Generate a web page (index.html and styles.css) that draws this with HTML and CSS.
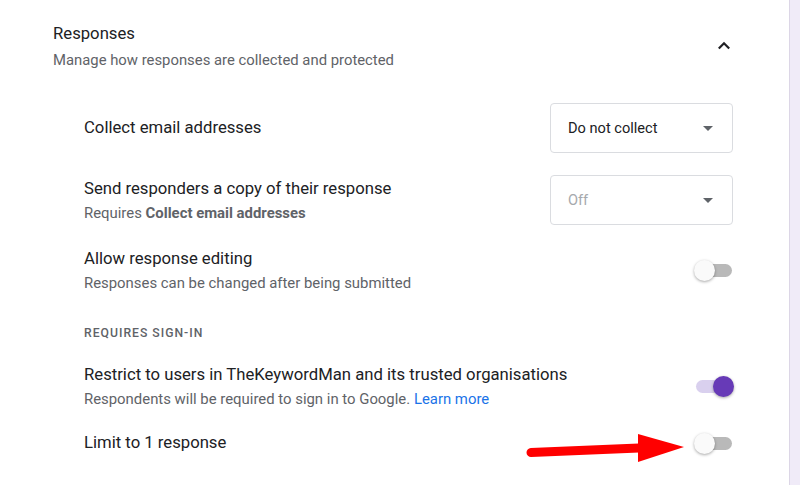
FILE: index.html
```html
<!DOCTYPE html>
<html lang="en">
<head>
<meta charset="utf-8">
<title>Responses settings</title>
<link rel="stylesheet" href="styles.css">
</head>
<body>
<div class="page">
  <section class="card">
    <header class="card-header">
      <div class="header-text">
        <div class="title">Responses</div>
        <div class="subtitle">Manage how responses are collected and protected</div>
      </div>
      <svg class="chevron" width="14" height="9" viewBox="0 0 14 9" aria-hidden="true">
        <path d="M1.8 7.5 L7 2.3 L12.2 7.5" fill="none" stroke="#202124" stroke-width="2.2"/>
      </svg>
    </header>

    <div class="settings">
      <div class="row">
        <div class="row-text">
          <div class="row-title">Collect email addresses</div>
        </div>
        <div class="select">
          <span class="select-value">Do not collect</span>
          <span class="caret"></span>
        </div>
      </div>

      <div class="row">
        <div class="row-text">
          <div class="row-title">Send responders a copy of their response</div>
          <div class="row-sub">Requires <b>Collect email addresses</b></div>
        </div>
        <div class="select">
          <span class="select-value disabled">Off</span>
          <span class="caret"></span>
        </div>
      </div>

      <div class="row">
        <div class="row-text">
          <div class="row-title">Allow response editing</div>
          <div class="row-sub">Responses can be changed after being submitted</div>
        </div>
        <div class="toggle"><span class="track"></span><span class="thumb"></span></div>
      </div>

      <div class="section-label">REQUIRES SIGN-IN</div>

      <div class="row">
        <div class="row-text">
          <div class="row-title">Restrict to users in TheKeywordMan and its trusted organisations</div>
          <div class="row-sub">Respondents will be required to sign in to Google. <a class="link" href="#">Learn more</a></div>
        </div>
        <div class="toggle on"><span class="track"></span><span class="thumb"></span></div>
      </div>

      <div class="row">
        <div class="row-text">
          <div class="row-title">Limit to 1 response</div>
        </div>
        <div class="toggle"><span class="track"></span><span class="thumb"></span></div>
      </div>
    </div>

    <svg class="annotation" width="170" height="40" viewBox="0 0 170 40" aria-hidden="true">
      <line x1="10" y1="28.5" x2="118" y2="24" stroke="#ff0000" stroke-width="9" stroke-linecap="round"/>
      <polygon points="117,10 163,23 117,38" fill="#ff0000"/>
    </svg>
  </section>
  <div class="side"></div>
</div>
</body>
</html>
```

FILE: styles.css
```css
* { box-sizing: border-box; }

html, body {
  margin: 0;
  padding: 0;
  height: 100%;
  background: #ffffff;
  font-family: Roboto, "Liberation Sans", Arial, sans-serif;
  color: #202124;
}

.page {
  display: flex;
  height: 485px;
  overflow: hidden;
}

.card {
  position: relative;
  width: 790px;
  flex: none;
  background: #ffffff;
  border-right: 1px solid #dcd6e6;
  padding: 22px 56px 0 53px;
}

.side {
  flex: 1;
  background: #f0ebf8;
}

.card-header {
  display: flex;
  align-items: center;
  justify-content: space-between;
}

.title {
  font-size: 16.7px;
  line-height: 24px;
  color: #202124;
}

.subtitle {
  margin-top: 4px;
  font-size: 14.85px;
  line-height: 20px;
  color: #5f6368;
}

.chevron {
  display: block;
  margin-right: 2px;
  margin-top: -1px;
}

.settings {
  display: flex;
  flex-direction: column;
  gap: 22px;
  margin-top: 33px;
  padding-left: 31px;
}

.row {
  display: flex;
  align-items: center;
  justify-content: space-between;
}

.row-title {
  font-size: 16.7px;
  line-height: 24px;
  color: #202124;
}

.row-sub {
  margin-top: 2px;
  font-size: 14.9px;
  line-height: 20px;
  color: #5f6368;
}

.row-sub b {
  font-weight: 700;
  color: #5f6368;
}

.link {
  color: #1a73e8;
  text-decoration: none;
}

.select {
  width: 183px;
  height: 50px;
  border: 1px solid #dadce0;
  border-radius: 4px;
  display: flex;
  align-items: center;
  justify-content: space-between;
  padding: 0 19px 0 17px;
}

.select-value {
  font-size: 14.6px;
  line-height: 20px;
  color: #202124;
}

.select-value.disabled {
  color: #a6a9ad;
}

.caret {
  width: 0;
  height: 0;
  border-left: 5px solid transparent;
  border-right: 5px solid transparent;
  border-top: 5px solid #5f6368;
}

.toggle {
  position: relative;
  width: 39px;
  height: 21px;
  flex: none;
}

.toggle .track {
  position: absolute;
  left: 2px;
  top: 4px;
  width: 36px;
  height: 13px;
  border-radius: 7px;
  background: #b9b9b9;
}

.toggle .thumb {
  position: absolute;
  left: 0;
  top: 0;
  width: 21px;
  height: 21px;
  border-radius: 50%;
  background: #fafafa;
  box-shadow: 0 1px 3px rgba(0, 0, 0, 0.35);
}

.toggle.on .track {
  background: #d9d0ee;
}

.toggle.on .thumb {
  left: 19px;
  background: #673ab7;
}

.section-label {
  margin-top: 10px;
  font-size: 12.2px;
  line-height: 16px;
  font-weight: 500;
  letter-spacing: 1px;
  color: #5f6368;
}

.annotation {
  position: absolute;
  left: 521px;
  top: 424px;
}
```
